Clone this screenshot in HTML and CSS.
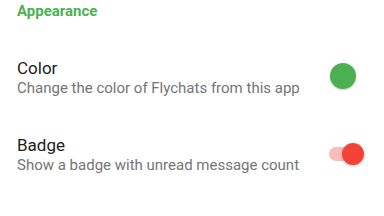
FILE: index.html
```html
<!DOCTYPE html>
<html lang="en">
<head>
    <meta charset="UTF-8">
    <meta name="viewport" content="width=device-width, initial-scale=1.0">
    <title>Settings</title>
    <link rel="stylesheet" href="styles.css">
</head>
<body>

    <div class="section-title">Appearance</div>

    <div class="pref-list">
        <div class="pref">
            <div class="pref-text">
                <div class="pref-title">Color</div>
                <div class="pref-summary">Change the color of Flychats from this app</div>
            </div>
            <div class="color-dot"></div>
        </div>

        <div class="pref">
            <div class="pref-text">
                <div class="pref-title">Badge</div>
                <div class="pref-summary">Show a badge with unread message count</div>
            </div>
            <div class="switch on">
                <div class="switch-track"></div>
                <div class="switch-thumb"></div>
            </div>
        </div>

        <div class="pref">
            <div class="pref-text">
                <div class="pref-title">Background</div>
                <div class="pref-summary">Choose a chat background</div>
            </div>
        </div>
    </div>

</body>
</html>
```

FILE: styles.css
```css
/* Grundlayout */
body {
    font-family: Roboto, "Noto Sans", sans-serif;
    background-color: #ffffff;
    margin: 0;
    color: #212121;
    overflow: hidden;
}

/* Abschnittsüberschrift */
.section-title {
    color: #4caf50;
    font-size: 15px;
    font-weight: bold;
    line-height: 20px;
    padding: 1px 17px 19px;
}

/* Einträge */
.pref {
    display: flex;
    align-items: center;
    justify-content: space-between;
    padding: 18px 20px 19px 17px;
}

.pref-title {
    font-size: 17px;
    line-height: 20px;
    color: #212121;
}

.pref-summary {
    font-size: 15px;
    line-height: 20px;
    color: #757575;
}

/* Farbkreis */
.color-dot {
    width: 26px;
    height: 26px;
    border-radius: 50%;
    background-color: #4caf50;
    box-shadow: 0 1px 2px rgba(0, 0, 0, 0.2);
    margin: 0 8px 5px 0;
}

/* Schalter */
.switch {
    position: relative;
    width: 35px;
    height: 22px;
    margin-bottom: 2px;
}

.switch-track {
    position: absolute;
    left: 0;
    top: 4px;
    width: 33px;
    height: 14px;
    border-radius: 7px;
    background-color: #fbbdb9;
}

.switch-thumb {
    position: absolute;
    right: 0;
    top: 0;
    width: 22px;
    height: 22px;
    border-radius: 50%;
    background-color: #f44336;
    box-shadow: 0 1px 3px rgba(0, 0, 0, 0.25);
}
```
